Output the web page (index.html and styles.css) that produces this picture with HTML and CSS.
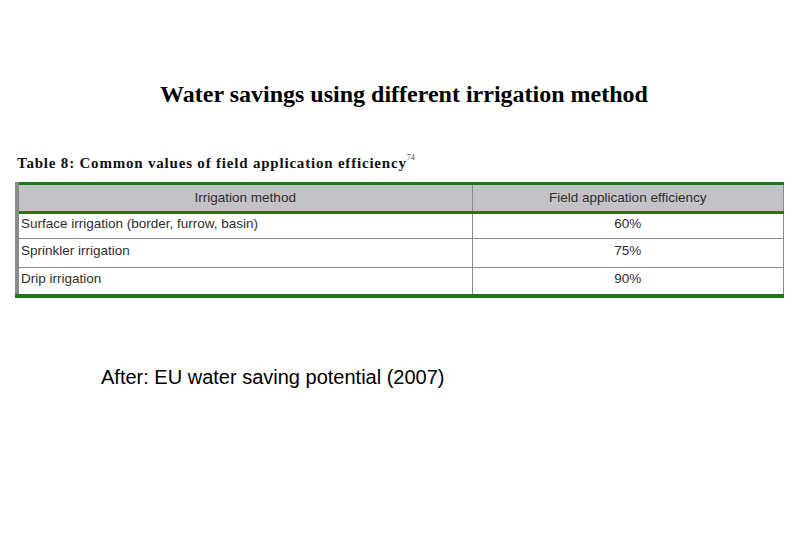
FILE: index.html
```html
<!DOCTYPE html>
<html>
<head>
<meta charset="utf-8">
<link rel="stylesheet" href="styles.css">
</head>
<body>
<div class="slide">
  <h1 class="title">Water savings using different irrigation method</h1>
  <div class="figure">
    <div class="caption">Table 8: Common values of field application efficiency<sup>74</sup></div>
    <table class="eff">
      <thead>
        <tr><th class="c1">Irrigation method</th><th class="c2">Field application efficiency</th></tr>
      </thead>
      <tbody>
        <tr class="r1"><td class="c1">Surface irrigation (border, furrow, basin)</td><td class="c2">60%</td></tr>
        <tr class="r2"><td class="c1">Sprinkler irrigation</td><td class="c2">75%</td></tr>
        <tr class="r3"><td class="c1">Drip irrigation</td><td class="c2">90%</td></tr>
      </tbody>
    </table>
  </div>
  <p class="source">After: EU water saving potential (2007)</p>
</div>
</body>
</html>
```
FILE: styles.css
```css
html, body {
  margin: 0;
  padding: 0;
  background: #fff;
}
.slide {
  width: 810px;
  height: 540px;
  display: flex;
  flex-direction: column;
  box-sizing: border-box;
  padding-top: 80px;
}
.title {
  margin: 0;
  font-family: "Liberation Serif", "Times New Roman", serif;
  font-weight: bold;
  font-size: 24px;
  line-height: 28px;
  color: #000;
  text-align: center;
  padding-right: 2px;
}
.figure {
  margin-top: 47px;
  margin-left: 15px;
  width: 770px;
}
.caption {
  font-family: "Liberation Serif", "Times New Roman", serif;
  font-weight: bold;
  font-size: 15px;
  letter-spacing: 0.8px;
  line-height: 17px;
  color: #111;
  padding-left: 2px;
  height: 27px;
}
.caption sup {
  font-size: 8px;
  font-weight: normal;
  letter-spacing: 0;
  vertical-align: 8px;
  line-height: 0;
  color: #444;
}
.eff {
  width: 769px;
  border-collapse: collapse;
  font-family: "Liberation Sans", Arial, sans-serif;
  font-size: 13.5px;
  color: #2e2e2e;
  border-left: 4px solid #8a8a8a;
  border-right: 1px solid #8a8a8a;
}
.eff thead tr {
  background: #c3c2c6;
  border-top: 3px solid #1a7a1a;
  border-bottom: 3px solid #1a7a1a;
}
.eff th {
  font-weight: normal;
  height: 29px;
  padding: 0 0 2px 0;
  box-sizing: border-box;
  text-align: center;
}
.eff td {
  box-sizing: border-box;
  padding: 0 0 5px 2px;
  border-top: 1px solid #8a8a8a;
}
.eff .r1 td {
  border-top: none;
  height: 26px;
}
.eff .r2 td {
  height: 29px;
}
.eff .r3 td {
  height: 28px;
}
.eff .r3 {
  border-bottom: 4px solid #1a7a1a;
}
.eff .c1 {
  width: 455px;
  border-right: 1px solid #8a8a8a;
}
.eff td.c2 {
  text-align: center;
  padding-left: 0;
}
.source {
  margin: 67px 0 0 101px;
  font-family: "Liberation Sans", Arial, sans-serif;
  font-size: 20px;
  line-height: 24px;
  color: #000;
}
```
